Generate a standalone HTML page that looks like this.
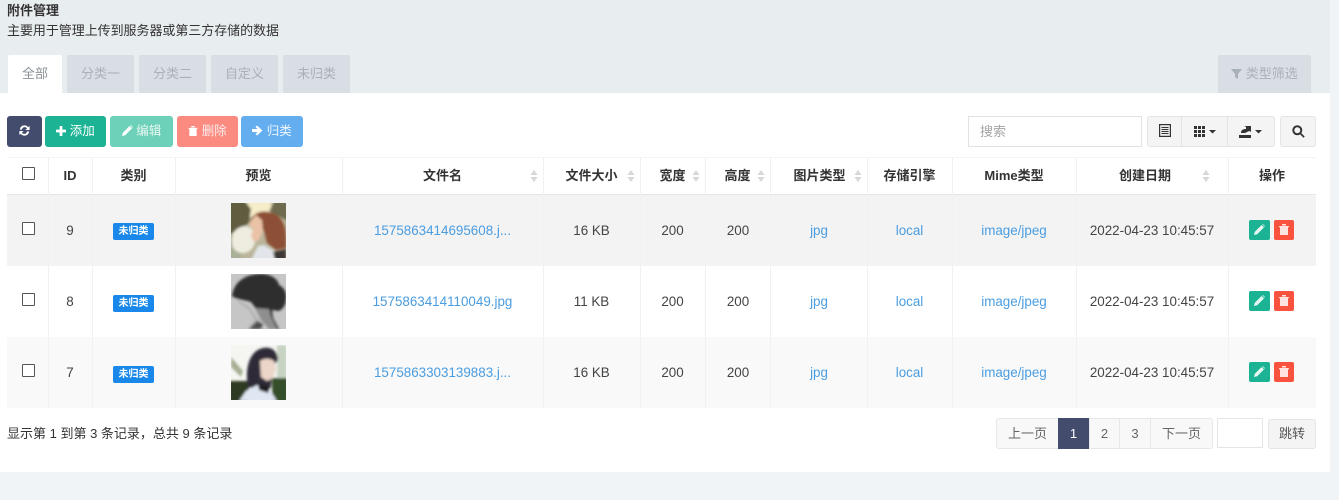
<!DOCTYPE html>
<html lang="zh"><head><meta charset="utf-8"><title>附件管理</title>
<style>
*{box-sizing:border-box}
html,body{margin:0;padding:0}
body{width:1339px;height:500px;overflow:hidden;position:relative;background:#f1f4f6;font:13px/18px "Liberation Sans","Noto Sans CJK SC",sans-serif;color:#444}
.a{position:absolute}
.tab{position:absolute;top:55px;height:38px;background:#d8dee4;color:#a9b1b8;text-align:center;line-height:38px;border-radius:2px 2px 0 0}
.btn{position:absolute;top:116px;height:31px;border-radius:3px;color:#fff;text-align:center;line-height:31px;white-space:nowrap;font-size:12.5px}
.btn svg,.tab svg{vertical-align:-1px}
.tool{position:absolute;top:116px;height:31px;background:#f4f4f4;border:1px solid #e2e5e7}
.row{position:absolute;left:7px;width:1309px;height:71px}
.vl{position:absolute;width:1px;top:157px;height:251px;background:#f0f1f2}
.th{position:absolute;top:157px;height:38px;line-height:37px;text-align:center;font-weight:bold;color:#333;white-space:nowrap}
.td{position:absolute;text-align:center;white-space:nowrap;height:18px;line-height:18px;font-size:13.4px}
.lnk{color:#4a9de0}
.cb{position:absolute;left:22px;width:13px;height:13px;border:1.5px solid #555;background:#fff;border-radius:1px}
.lab{position:absolute;left:113px;width:41px;height:17px;background:#1a88ea;color:#fff;font-size:10px;line-height:17px;text-align:center;border-radius:2px;font-weight:bold}
.ib{position:absolute;width:21px;height:20px;border-radius:2px;text-align:center}
.ib svg{display:block;margin:4px auto 0}
.s{position:absolute;width:8px;height:14px;top:169px}
.pg{position:absolute;top:418px;height:31px;background:#f8f8f8;border:1px solid #e6e7e8;text-align:center;line-height:29px;color:#666}
</style></head><body>
<div class="a" style="left:0;top:0;width:1330px;height:93px;background:#e8edf0"></div>
<div class="a" style="left:0;top:93px;width:1330px;height:379px;background:#fff"></div>
<div class="a" style="left:7px;top:2px;font-weight:bold;color:#333;font-size:13px">附件管理</div>
<div class="a" style="left:7px;top:22px;color:#333;font-size:13px;letter-spacing:-.05px">主要用于管理上传到服务器或第三方存储的数据</div>

<div class="tab" style="left:8px;width:54px;background:#fff;color:#8b9297;height:39px">全部</div>
<div class="tab" style="left:67px;width:67px">分类一</div>
<div class="tab" style="left:139px;width:67px">分类二</div>
<div class="tab" style="left:211px;width:67px">自定义</div>
<div class="tab" style="left:283px;width:67px">未归类</div>
<div class="tab" style="left:1218px;width:93px"><svg width="11" height="11" viewBox="0 0 11 11"><path d="M0 1h11L7 6v5L4 9V6z" fill="#a9b1b8"/></svg> 类型筛选</div>

<div class="btn" style="left:7px;width:35px;background:#444c6e"><svg width="13" height="13" viewBox="0 0 14 14" style="vertical-align:-2px"><path d="M2 6a5 5 0 0 1 9-2.500L12.500 2v4.500H8l1.800-1.800A3 3 0 0 0 4.300 6zM12 8a5 5 0 0 1-9 2.500L1.500 12V7.500H6L4.200 9.300A3 3 0 0 0 9.700 8z" fill="#fff"/></svg></div>
<div class="btn" style="left:45px;width:61px;background:#1bb394"><svg width="10" height="10" viewBox="0 0 11 11"><path d="M4 0h3v4h4v3H7v4H4V7H0V4h4z" fill="#fff"/></svg> 添加</div>
<div class="btn" style="left:110px;width:63px;background:#6dd0b8;color:#e8f7f3"><svg width="11" height="11" viewBox="0 0 11 11"><path d="M0 11l.8-3.200L7.600 1l2.400 2.400L3.200 10.200zM8.300.4l.6-.4 2.100 2.100-.4.700z" fill="#fff"/></svg> 编辑</div>
<div class="btn" style="left:177px;width:61px;background:#fb8a80;color:#fdeceb"><svg width="10" height="10" viewBox="0 0 10 11"><path d="M0 2h10v1.200H9V11H1V3.200H0zM3 0h4v1.500H3z" fill="#fff"/></svg> 删除</div>
<div class="btn" style="left:241px;width:62px;background:#64aef0;color:#eef6fd"><svg width="11" height="11" viewBox="0 0 11 11"><path d="M0 4h5.500L3.500 2 5 .5 10.500 5.500 5 10.500 3.500 9l2-2H0z" fill="#fff"/></svg> 归类</div>

<div class="a" style="left:968px;top:116px;width:174px;height:31px;background:#fff;border:1px solid #e0e2e4;color:#a5a5a5;line-height:29px;padding-left:11px">搜索</div>
<div class="tool" style="left:1147px;width:35px;border-radius:3px 0 0 3px"><svg class="a" style="left:11px;top:7px" width="12" height="13" viewBox="0 0 12 13"><rect x=".6" y=".6" width="10.800" height="11.800" fill="#eee" stroke="#333" stroke-width="1.200"/><path d="M2.500 3h7v1h-7zM2.500 5h7v1h-7zM2.500 7h7v1h-7zM2.500 9h7v1h-7z" fill="#333"/></svg></div>
<div class="tool" style="left:1181px;width:47px"><svg class="a" style="left:12px;top:9px" width="24" height="11" viewBox="0 0 24 11"><path d="M0 0h3v3H0zM4 0h3v3H4zM8 0h3v3H8zM0 4h3v3H0zM4 4h3v3H4zM8 4h3v3H8zM0 8h3v3H0zM4 8h3v3H4zM8 8h3v3H8zM15 4h7l-3.500 3.500z" fill="#333"/></svg></div>
<div class="tool" style="left:1227px;width:48px;border-radius:0 3px 3px 0"><svg class="a" style="left:11px;top:8px" width="25" height="14" viewBox="0 0 25 14"><path d="M0 10h12v3H0z" fill="#333"/><path d="M2 8c0-3 2-4 5-4V2L5.500 1H12v6l-1.500-1L9 6.500 6 8z" fill="#333"/><path d="M16 5h7l-3.500 3.500z" fill="#333"/></svg></div>
<div class="tool" style="left:1280px;width:36px;border-radius:3px"><svg class="a" style="left:11px;top:8px" width="13" height="13" viewBox="0 0 13 13"><circle cx="5.300" cy="5.300" r="4" fill="none" stroke="#333" stroke-width="2"/><path d="M8 9.200l1.200-1.200 3.500 3.500-1.200 1.200z" fill="#333"/></svg></div>

<div class="a" style="left:7px;top:157px;width:1309px;height:38px;border-top:1px solid #f2f3f4;border-bottom:1px solid #e4e7e9"></div>
<div class="row" style="top:195px;background:#f3f3f4"></div>
<div class="row" style="top:266px;background:#fff"></div>
<div class="row" style="top:337px;background:#f9f9f9"></div>
<div class="vl" style="left:48px"></div><div class="vl" style="left:92px"></div><div class="vl" style="left:175px"></div><div class="vl" style="left:342px"></div><div class="vl" style="left:543px"></div><div class="vl" style="left:640px"></div><div class="vl" style="left:705px"></div><div class="vl" style="left:770px"></div><div class="vl" style="left:867px"></div><div class="vl" style="left:952px"></div><div class="vl" style="left:1076px"></div><div class="vl" style="left:1228px"></div>

<div class="cb" style="top:167px"></div>
<div class="th" style="left:48px;width:44px">ID</div>
<div class="th" style="left:92px;width:83px">类别</div>
<div class="th" style="left:175px;width:167px">预览</div>
<div class="th" style="left:342px;width:201px">文件名</div>
<div class="th" style="left:543px;width:97px">文件大小</div>
<div class="th" style="left:640px;width:65px">宽度</div>
<div class="th" style="left:705px;width:65px">高度</div>
<div class="th" style="left:770px;width:97px;padding-left:2px">图片类型</div>
<div class="th" style="left:867px;width:85px">存储引擎</div>
<div class="th" style="left:952px;width:124px">Mime类型</div>
<div class="th" style="left:1076px;width:152px;padding-right:14px">创建日期</div>
<div class="th" style="left:1228px;width:88px">操作</div>
<svg class="s" style="left:530px" viewBox="0 0 8 14"><path d="M4 1l3.500 5h-7zM4 13L.5 8h7z" fill="#d5d8db"/></svg>
<svg class="s" style="left:627px" viewBox="0 0 8 14"><path d="M4 1l3.500 5h-7zM4 13L.5 8h7z" fill="#d5d8db"/></svg>
<svg class="s" style="left:692px" viewBox="0 0 8 14"><path d="M4 1l3.500 5h-7zM4 13L.5 8h7z" fill="#d5d8db"/></svg>
<svg class="s" style="left:757px" viewBox="0 0 8 14"><path d="M4 1l3.500 5h-7zM4 13L.5 8h7z" fill="#d5d8db"/></svg>
<svg class="s" style="left:854px" viewBox="0 0 8 14"><path d="M4 1l3.500 5h-7zM4 13L.5 8h7z" fill="#d5d8db"/></svg>
<svg class="s" style="left:1202px" viewBox="0 0 8 14"><path d="M4 1l3.500 5h-7zM4 13L.5 8h7z" fill="#d5d8db"/></svg>

<!-- row 1 -->
<div class="cb" style="top:222px"></div>
<div class="td" style="left:48px;width:44px;top:222px">9</div>
<div class="lab" style="top:223px">未归类</div>
<svg class="a" style="left:231px;top:203px" width="55" height="55" viewBox="0 0 55 55"><defs><filter id="b" x="-20%" y="-20%" width="140%" height="140%"><feGaussianBlur stdDeviation="1.300"/></filter></defs><rect width="55" height="55" fill="#b9b49a"/><g filter="url(#b)"><path d="M14 -2h26v16H14z" fill="#f5ecc8"/><path d="M-2 -2h16l6 8-2 14-20 12z" fill="#5e5c3f"/><path d="M38 8l6-10h13v20z" fill="#6e6a4e"/><path d="M-2 32h12v25H-2z" fill="#a9b097"/><path d="M6 26c5-4 12-3 15 0s5 8 3 14-6 10-12 10S1 46 1 39s1-10 5-13z" fill="#efede0"/><path d="M19 20c1-9 10-13 19-11 13 2 17 14 17 26v10l-10 2-9-7-3-12-6-6z" fill="#8d4f36"/><path d="M20 18l5-6 6 5 1 11-4 9-5 2-3-6 2-7-4-4z" fill="#eac3a6"/><path d="M20 57l7-14 6-1 10 6 5 9z" fill="#e2e5ea"/><path d="M42 49l13-3v11H44z" fill="#3e3735"/></g></svg>
<div class="td lnk" style="left:342px;width:201px;top:222px">1575863414695608.j...</div>
<div class="td" style="left:543px;width:97px;top:222px">16 KB</div>
<div class="td" style="left:640px;width:65px;top:222px">200</div>
<div class="td" style="left:705px;width:66px;top:222px">200</div>
<div class="td lnk" style="left:770px;width:98px;top:222px">jpg</div>
<div class="td lnk" style="left:867px;width:85px;top:222px">local</div>
<div class="td lnk" style="left:952px;width:124px;top:222px">image/jpeg</div>
<div class="td" style="left:1076px;width:152px;top:222px">2022-04-23 10:45:57</div>
<div class="ib" style="left:1249px;top:220px;background:#1bb394"><svg width="11" height="11" viewBox="0 0 11 11"><path d="M0 11l.8-3.200L7.600 1l2.400 2.400L3.200 10.200zM8.300.4l.6-.4 2.100 2.100-.4.700z" fill="#e6f7f3"/></svg></div>
<div class="ib" style="left:1274px;top:220px;background:#f9533f;width:20px"><svg width="10" height="11" viewBox="0 0 10 11"><path d="M0 2h10v1.200H9V11H1V3.200H0zM3 0h4v1.500H3z" fill="#fde4e1"/></svg></div>

<!-- row 2 -->
<div class="cb" style="top:293px"></div>
<div class="td" style="left:48px;width:44px;top:293px">8</div>
<div class="lab" style="top:295px">未归类</div>
<svg class="a" style="left:231px;top:274px" width="55" height="55" viewBox="0 0 55 55"><rect width="55" height="55" fill="#c6c6c6"/><g filter="url(#b)"><path d="M1 22C3 8 14 0 30 0c10 0 17 5 18 11 5 2 8 8 7 14 0 6-3 10-7 12l-7-1 1 8 6 11H38l-6-8-6-11-6-8C15 26 6 26 1 22z" fill="#2f2f2f"/><path d="M3 24c6 3 11 5 16 10l10 14 4 7H16l8-9-6-10z" fill="#b0b0b0"/><path d="M24 34l6 12 8 9h8l-6-12-2-8z" fill="#8f8f8f"/><path d="M18 55l8-8 6 3-2 5z" fill="#505050"/></g></svg>
<div class="td lnk" style="left:342px;width:201px;top:293px">1575863414110049.jpg</div>
<div class="td" style="left:543px;width:97px;top:293px">11 KB</div>
<div class="td" style="left:640px;width:65px;top:293px">200</div>
<div class="td" style="left:705px;width:66px;top:293px">200</div>
<div class="td lnk" style="left:770px;width:98px;top:293px">jpg</div>
<div class="td lnk" style="left:867px;width:85px;top:293px">local</div>
<div class="td lnk" style="left:952px;width:124px;top:293px">image/jpeg</div>
<div class="td" style="left:1076px;width:152px;top:293px">2022-04-23 10:45:57</div>
<div class="ib" style="left:1249px;top:291px;background:#1bb394"><svg width="11" height="11" viewBox="0 0 11 11"><path d="M0 11l.8-3.200L7.600 1l2.400 2.400L3.200 10.200zM8.300.4l.6-.4 2.100 2.100-.4.700z" fill="#e6f7f3"/></svg></div>
<div class="ib" style="left:1274px;top:291px;background:#f9533f;width:20px"><svg width="10" height="11" viewBox="0 0 10 11"><path d="M0 2h10v1.200H9V11H1V3.200H0zM3 0h4v1.500H3z" fill="#fde4e1"/></svg></div>

<!-- row 3 -->
<div class="cb" style="top:364px"></div>
<div class="td" style="left:48px;width:44px;top:364px">7</div>
<div class="lab" style="top:366px">未归类</div>
<svg class="a" style="left:231px;top:345px" width="55" height="55" viewBox="0 0 55 55"><rect width="55" height="55" fill="#f5f6f2"/><g filter="url(#b)"><path d="M46 0h10v34H46z" fill="#c7d4c4"/><path d="M0 12l12 14-2 6L0 22z" fill="#a5ae92"/><path d="M-2 36h20v21H-2z" fill="#2f3b24"/><path d="M41 33h16v24H41z" fill="#34502b"/><path d="M17 42c-3-16 0-36 15-39 9-2 15 4 15 12l-5 6-2 20c-1 4-6 6-12 4z" fill="#2d2c38"/><path d="M29 16c4-3 10-3 14 0l2 8-3 9-6 3-6-4z" fill="#ecd5c9"/><path d="M8 56l7-10 11-6 13 5 7 11z" fill="#dfe7f2"/><path d="M27 39l12 3-2 6-9-3z" fill="#1f1f22"/></g></svg>
<div class="td lnk" style="left:342px;width:201px;top:364px">1575863303139883.j...</div>
<div class="td" style="left:543px;width:97px;top:364px">16 KB</div>
<div class="td" style="left:640px;width:65px;top:364px">200</div>
<div class="td" style="left:705px;width:66px;top:364px">200</div>
<div class="td lnk" style="left:770px;width:98px;top:364px">jpg</div>
<div class="td lnk" style="left:867px;width:85px;top:364px">local</div>
<div class="td lnk" style="left:952px;width:124px;top:364px">image/jpeg</div>
<div class="td" style="left:1076px;width:152px;top:364px">2022-04-23 10:45:57</div>
<div class="ib" style="left:1249px;top:362px;background:#1bb394"><svg width="11" height="11" viewBox="0 0 11 11"><path d="M0 11l.8-3.200L7.600 1l2.400 2.400L3.200 10.200zM8.300.4l.6-.4 2.100 2.100-.4.700z" fill="#e6f7f3"/></svg></div>
<div class="ib" style="left:1274px;top:362px;background:#f9533f;width:20px"><svg width="10" height="11" viewBox="0 0 10 11"><path d="M0 2h10v1.200H9V11H1V3.200H0zM3 0h4v1.500H3z" fill="#fde4e1"/></svg></div>

<div class="a" style="left:7px;top:425px;color:#333;white-space:nowrap">显示第 1 到第 3 条记录，总共 9 条记录</div>
<div class="pg" style="left:996px;width:63px;border-radius:3px 0 0 3px">上一页</div>
<div class="pg" style="left:1058px;width:31px;background:#444c6e;border-color:#444c6e;color:#fff">1</div>
<div class="pg" style="left:1089px;width:31px">2</div>
<div class="pg" style="left:1119px;width:32px">3</div>
<div class="pg" style="left:1150px;width:63px;border-radius:0 3px 3px 0">下一页</div>
<div class="a" style="left:1217px;top:418px;width:46px;height:30px;background:#fff;border:1px solid #e3e5e7"></div>
<div class="a" style="left:1268px;top:419px;width:48px;height:30px;background:#f4f4f4;border:1px solid #e3e5e7;border-radius:3px;text-align:center;line-height:28px;color:#555">跳转</div>
</body></html>
